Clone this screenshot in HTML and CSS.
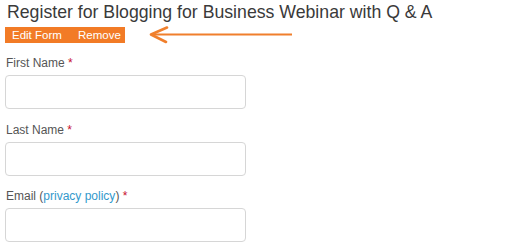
FILE: index.html
```html
<!DOCTYPE html>
<html>
<head>
<meta charset="utf-8">
<link rel="stylesheet" href="styles.css">
</head>
<body>
<div class="page">
  <h1 class="title">Register for Blogging for Business Webinar with Q &amp; A</h1>
  <div class="toolbar">
    <div class="actions">
      <a class="action action-edit">Edit Form</a>
      <a class="action action-remove">Remove</a>
    </div>
    <svg class="arrow" width="146" height="18" viewBox="0 0 146 18">
      <path d="M3 8.5 H144" stroke="#f07f2c" stroke-width="2.2" fill="none"/>
      <path d="M19 1.5 L3 8.5 L18 16" stroke="#f07f2c" stroke-width="2.6" fill="none" stroke-linecap="round" stroke-linejoin="round"/>
    </svg>
  </div>
  <form class="form">
    <div class="field">
      <label class="label">First Name <span class="req">*</span></label>
      <div class="input"></div>
    </div>
    <div class="field">
      <label class="label">Last Name <span class="req">*</span></label>
      <div class="input"></div>
    </div>
    <div class="field">
      <label class="label">Email (<a class="link">privacy policy</a>) <span class="req">*</span></label>
      <div class="input"></div>
    </div>
  </form>
</div>
</body>
</html>
```
FILE: styles.css
```css
html, body {
  margin: 0;
  padding: 0;
  background: #ffffff;
}
.page {
  padding: 2px 0 0 5px;
  font-family: "Liberation Sans", Arial, sans-serif;
}
.title {
  margin: 0 0 5px 2px;
  font-size: 17.7px;
  line-height: 20px;
  font-weight: normal;
  color: #3a3a3a;
}
.toolbar {
  display: flex;
  align-items: center;
  height: 16px;
  margin-bottom: 11px;
}
.actions {
  display: flex;
  align-items: center;
  width: 120px;
  height: 16px;
  background: #f27b26;
  box-sizing: border-box;
  padding-left: 7px;
}
.action {
  color: #ffffff;
  font-size: 11.5px;
  line-height: 16px;
}
.action-edit {
  width: 66px;
}
.arrow {
  margin-left: 23px;
  display: block;
}
.form {
  margin: 0;
}
.field {
  margin-bottom: 11.5px;
}
.label {
  display: block;
  font-size: 12px;
  line-height: 18px;
  color: #555555;
  margin: 0 0 3px 1px;
}
.req {
  color: #c8102e;
}
.link {
  color: #3399cc;
}
.input {
  width: 241px;
  height: 34px;
  box-sizing: border-box;
  border: 1px solid #d6d6d6;
  border-radius: 4px;
  background: #fff;
}
```
